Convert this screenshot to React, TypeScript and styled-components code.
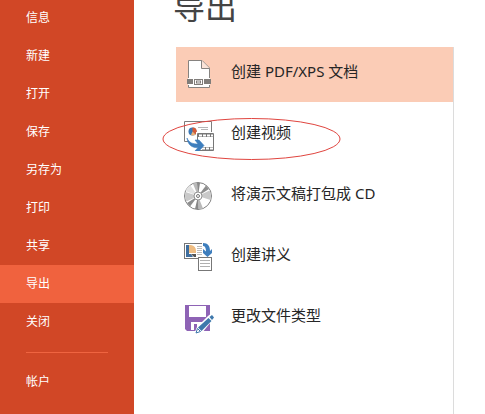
import React from "react";
import styled, { createGlobalStyle } from "styled-components";

const GlobalStyle = createGlobalStyle`
  * { box-sizing: border-box; }
  body {
    margin: 0;
    background: #fff;
    font-family: "Noto Sans", "Noto Sans CJK SC", sans-serif;
  }
`;

const Page = styled.div`
  display: flex;
  height: 100vh;
  overflow: hidden;
`;

const Sidebar = styled.nav`
  flex: none;
  width: 134px;
  background: #d14726;
  overflow: hidden;
`;

const Menu = styled.div`
  display: flex;
  flex-direction: column;
  margin-top: -1px;
`;

const MenuItem = styled.button<{ $active?: boolean }>`
  height: 38px;
  padding: 0 26px;
  border: 0;
  background: ${(p) => (p.$active ? "#f0623e" : "transparent")};
  color: #fff;
  font: inherit;
  font-size: 12px;
  line-height: 18px;
  text-align: left;
  cursor: pointer;
`;

const Divider = styled.hr`
  height: 1px;
  margin: 11px 26px 10px;
  border: 0;
  background: #ef6440;
`;

const Main = styled.main`
  flex: 1;
  display: flex;
  flex-direction: column;
  padding: 0 31px 0 42px;
`;

const Title = styled.h1`
  margin: -17px 0 16px -3px;
  color: #444;
  font-size: 32px;
  font-weight: 400;
  line-height: 48px;
`;

const Options = styled.section`
  flex: 1;
  display: flex;
  flex-direction: column;
  gap: 6px;
  border-right: 1px solid #dcdcdc;
`;

const Option = styled.button<{ $selected?: boolean }>`
  position: relative;
  display: flex;
  align-items: center;
  gap: 16px;
  height: 55px;
  padding: 0 8px;
  border: 0;
  background: ${(p) => (p.$selected ? "#fbccb6" : "transparent")};
  color: #262626;
  font: inherit;
  font-size: 15px;
  line-height: 22px;
  text-align: left;
  cursor: pointer;
`;

const OptionLabel = styled.span`
  padding-bottom: 8px;
`;

const Icon = styled.svg.attrs({
  width: 31,
  height: 31,
  viewBox: "0 0 31 31",
  "aria-hidden": true,
})`
  flex: none;
`;

const Highlight = styled.svg`
  position: absolute;
  left: -14px;
  top: 9px;
  pointer-events: none;
`;

const PdfIcon = () => (
  <Icon>
    <path d="M4.5 1.5H18L25.5 9V28.5H4.5Z" fill="#fff" stroke="#868380" />
    <path d="M17.5 1.5V9.5H25.5" fill="#fbe3d8" stroke="#868380" />
    <path d="M2 19H28V26H2Z" fill="#fbccb6" />
    <path d="M4 19H26V26H4Z" fill="#fff" />
    <path d="M3 20H9V25H3ZM20 20H27V25H20Z" fill="#807d7a" />
    <rect x="10.5" y="20.5" width="8" height="5" fill="#fff" stroke="#807d7a" />
    <rect x="12.5" y="22" width="4" height="2" fill="#fff" stroke="#807d7a" />
  </Icon>
);

const VideoIcon = () => (
  <Icon>
    <path d="M.5 1.5H27.5V13M.5 1.5V21.5H4" fill="none" stroke="#7d7d7d" />
    <path d="M14 7.5H24M17 9.5H24" fill="none" stroke="#b5b5b5" />
    <circle cx="8.5" cy="11.5" r="4" fill="#3b78b5" />
    <path d="M8.5 11.5V7.5A4 4 0 0 1 11.5 14.5Z" fill="#d65a35" />
    <path d="M8.5 11.5L11.5 14.5A4 4 0 0 1 7 15Z" fill="#edb074" />
    <path d="M12 12H30V31H12Z" fill="#fff" />
    <path d="M13.5 21V13.5H29.5V30.5H15" fill="none" stroke="#777" />
    <path d="M14 15.5H29M18 28.5H29" stroke="#777" strokeWidth="3" />
    <path d="M15 15.5H29M18 28.5H29" stroke="#fff" strokeWidth="2" strokeDasharray="3 1" />
    <path d="M3 18C5 23 9 24 14 24L11 20H15L20 25.5L15 31H11L14 27.5C8 28 4 25 3 18Z" fill="#3e7ebd" stroke="#3e7ebd" strokeWidth=".6" />
  </Icon>
);

const DiscIcon = () => (
  <Icon>
    <circle cx="14" cy="15" r="13.5" fill="#fff" stroke="#808080" />
    <path d="M14 15L1.5 10A13.5 13.5 0 0 1 6 4Z" fill="#e2e2e2" />
    <path d="M14 15L9 2.7A13 13 0 0 1 13 2Z" fill="#b9b9b9" />
    <path d="M14 15L13 2H16Z" fill="#888" />
    <path d="M14 15L22 4.5L25 8Z" fill="#8d8d8d" />
    <path d="M14 15L25.5 9.5A13 13 0 0 1 26.5 19Z" fill="#c9c9c9" />
    <path d="M14 15L19 27.5A13 13 0 0 1 14.5 28Z" fill="#b9b9b9" />
    <path d="M14 15L14.5 28H11Z" fill="#888" />
    <path d="M14 15L6 25.5L3 22Z" fill="#8d8d8d" />
    <path d="M14 15L2.5 20.5A13 13 0 0 1 1.5 11Z" fill="#c9c9c9" />
    <circle cx="14" cy="15" r="4" fill="#fff" stroke="#929292" />
    <circle cx="14" cy="15" r="1.5" fill="#fff" stroke="#777" />
  </Icon>
);

const HandoutIcon = () => (
  <Icon>
    <rect x=".5" y="1.5" width="19" height="15" fill="#fff" stroke="#777" />
    <path d="M2 3H5V12H7L9 15H2Z" fill="#3f6e9e" />
    <path d="M5 3H7A6 6 0 0 1 12 9V11H5Z" fill="#efbd83" />
    <path d="M7 12H12V15H10Z" fill="#555" />
    <path d="M13 4.5H18M13 6.5H18M13 8.5H18M13 10.5H18M13 12.5H18" stroke="#bbb" />
    <path d="M18 0H20V15H18Z" fill="#fff" />
    <path d="M19 1C24 1 26 4 26 9L28 7V11L23.5 15L19 11V7L22 9.500C22 6 21 4 19 4Z" fill="#3e7ebd" />
    <rect x="14.5" y="15.5" width="13" height="13" fill="#fff" stroke="#777" />
    <path d="M16 18.5H26M16 21.5H26M16 24.5H26" stroke="#b0b0b0" />
  </Icon>
);

const FileTypeIcon = () => (
  <Icon>
    <path d="M1 2H26V28H3L1 26Z" fill="#8e63b5" />
    <path d="M5 3H22V14H5Z" fill="#fff" />
    <path d="M7 19H20V27H13V21H10V27H7Z" fill="#fff" />
    <path d="M24 13L28 10L31 14L18 30L10 31L13 24Z" fill="#fff" />
    <path d="M25.5 14L28 12L30 14.5L28 17Z" fill="#3e78ac" />
    <path d="M24.5 15L27.5 18L17.5 28L14 24.5Z" fill="#3e78ac" />
    <path d="M13.5 25.5L16.5 28.5L12 30Z" fill="#fff" stroke="#3e78ac" />
  </Icon>
);

const menu = ["信息", "新建", "打开", "保存", "另存为", "打印", "共享", "导出", "关闭"];

const options = [
  { label: "创建 PDF/XPS 文档", Glyph: PdfIcon, selected: true },
  { label: "创建视频", Glyph: VideoIcon, circled: true },
  { label: "将演示文稿打包成 CD", Glyph: DiscIcon },
  { label: "创建讲义", Glyph: HandoutIcon },
  { label: "更改文件类型", Glyph: FileTypeIcon },
];

export default function App() {
  return (
    <>
      <GlobalStyle />
      <Page>
        <Sidebar>
          <Menu>
            {menu.map((name) => (
              <MenuItem key={name} $active={name === "导出"}>
                {name}
              </MenuItem>
            ))}
            <Divider />
            <MenuItem>帐户</MenuItem>
          </Menu>
        </Sidebar>
        <Main>
          <Title>导出</Title>
          <Options>
            {options.map(({ label, Glyph, selected, circled }) => (
              <Option key={label} $selected={selected}>
                <Glyph />
                <OptionLabel>{label}</OptionLabel>
                {circled && (
                  <Highlight width="179" height="44" viewBox="0 0 179 44" aria-hidden="true">
                    <ellipse cx="89.5" cy="22" rx="88.5" ry="20.5" fill="none" stroke="#e0453f" />
                  </Highlight>
                )}
              </Option>
            ))}
          </Options>
        </Main>
      </Page>
    </>
  );
}
